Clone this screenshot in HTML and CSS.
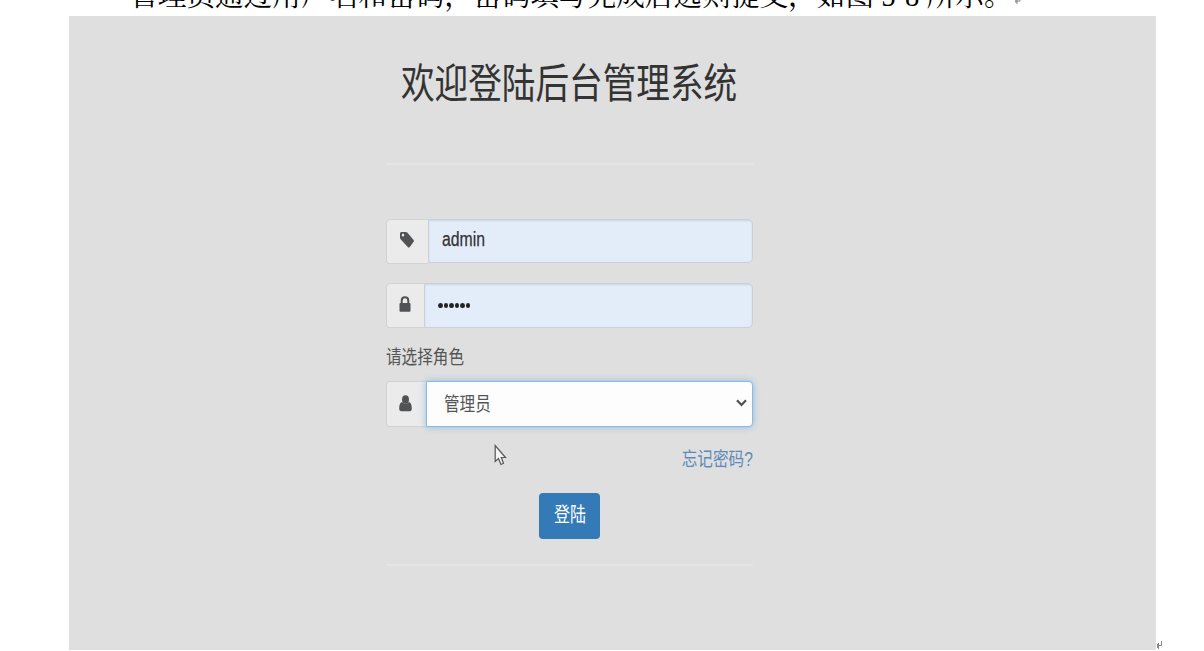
FILE: index.html
```html
<!DOCTYPE html>
<html lang="zh-CN">
<head>
<meta charset="utf-8">
<title>后台管理系统</title>
<link rel="stylesheet" href="styles.css">
</head>
<body>
<p class="caption"><span>管理员通过用户名和密码，密码填写完成后选则提交，如图 5-8 所示。</span><svg class="mark" width="7" height="9" viewBox="0 0 7 9"><path d="M6 0v4H1M3 2v5M2 3v3" fill="none" stroke="#888"/></svg></p>
<div class="row">
<main class="page">
  <form class="login">
    <h1 class="title"><span class="narrow">欢迎登陆后台管理系统</span></h1>
    <hr class="rule">
    <div class="group name">
      <span class="addon"><svg width="14" height="16" viewBox="0 0 14 16"><path fill="#505254" fill-rule="evenodd" d="M0 1.5Q0 0 1.3 0H5.8Q6.8 0 7.5.8L13.6 8Q14.3 8.9 13.6 9.8L9.600 15.2Q8.800 16 8 15.2L.8 7.5Q0 6.800 0 5.600ZM1.8 3A1.2 1.5 0 1 0 4.2 3A1.2 1.5 0 1 0 1.8 3Z"/></svg></span>
      <span class="field"><span class="narrow latin">admin</span></span>
    </div>
    <div class="group pass">
      <span class="addon"><svg width="12" height="16" viewBox="0 0 12 16"><path d="M2.7 8V4.7C2.7.1 9.3.1 9.3 4.7V8" fill="none" stroke="#505254" stroke-width="2"/><rect y="7" x=".5" width="11" height="8.7" rx="1" fill="#505254"/></svg></span>
      <span class="field"><span class="dots"><i></i><i></i><i></i><i></i><i></i><i></i></span></span>
    </div>
    <div class="label"><span class="narrow">请选择角色</span></div>
    <div class="group role">
      <span class="addon"><svg width="13" height="17" viewBox="0 0 13 17"><ellipse cx="6.5" cy="4.500" rx="3.500" ry="4.300" fill="#505254"/><path fill="#505254" d="M3 7C1 7.700.2 10 .2 13.600.2 15.500 1 16.300 2.200 16.300H10.800C12 16.300 12.800 15.500 12.800 13.600 12.800 10 12 7.700 10 7 8 9 5 9 3 7Z"/></svg></span>
      <span class="field select"><span class="narrow">管理员</span><svg class="chevron" width="11" height="8" viewBox="0 0 11 8"><path d="M1 1.2 5.5 6 10 1.2" fill="none" stroke="#505050" stroke-width="2.2"/></svg></span>
    </div>
    <div class="forgot"><a class="narrow">忘记密码?</a></div>
    <div class="submit"><span class="button"><span class="narrow">登陆</span></span></div>
    <hr class="rule last">
  </form>
  <svg class="cursor" width="13" height="22" viewBox="0 0 13 22"><path d="M1.2 1.5V17.5L4.5 14.6 7 20.5 9.5 19.3 7.3 13.5H11.5Z" fill="#f4f4f4" stroke="#555" stroke-width="1.2"/></svg>
</main>
<svg class="mark end" width="7" height="9" viewBox="0 0 7 9"><path d="M5.5 0v4.500H1M2.500 2v6M1.500 3v4" fill="none" stroke="#888"/></svg>
</div>
</body>
</html>
```
FILE: styles.css
```css
* { box-sizing: border-box; }
body {
  margin: 0;
  height: 651px;
  overflow: hidden;
  background: #fff;
  font-family: "Liberation Sans", "Noto Sans CJK SC", sans-serif;
}
.caption {
  display: flex;
  align-items: flex-end;
  height: 16px;
  margin: 0;
  padding-left: 129px;
  overflow: hidden;
  color: #000;
  font: 28.67px/40px "Liberation Serif", "Noto Serif CJK SC", "Noto Sans CJK SC", serif;
  white-space: nowrap;
}
.caption span { height: 40px; margin-bottom: 0; }
.mark { flex: none; margin: 0 0 10px 1px; }
.row { display: flex; align-items: flex-end; padding-left: 69px; }
.page { position: relative; width: 1087px; height: 634px; background: #dfdfdf; }
.mark.end { margin: 0; }
.login { width: 367px; margin-left: 316.500px; }
.narrow {
  display: inline-block;
  transform: scaleX(.8);
  transform-origin: left center;
  white-space: nowrap;
}
.title {
  height: 147px;
  margin: 0;
  padding: 38px 0 0 15px;
  color: #333;
  font-size: 41px;
  font-weight: 400;
  line-height: 60px;
}
.title .narrow { transform: scaleX(.82); }
.rule { height: 2px; margin: 0; border: 0; background: #e5e5e5; }
.group { display: flex; height: 45px; color: #555; font-size: 19.500px; }
.addon {
  display: flex;
  align-items: center;
  justify-content: center;
  width: 42px;
  padding-right: 1px;
  padding-bottom: 3px;
  border: 1px solid #d2d2d2;
  border-right: 0;
  border-radius: 4px 0 0 4px;
  background: #ebebeb;
}
.field {
  display: flex;
  flex: 1;
  align-items: center;
  height: 44px;
  padding: 0 5px 3px 13px;
  border: 1px solid #cbd1d9;
  border-radius: 0 5px 5px 0;
  background: #e3edfa;
  box-shadow: inset 0 1px 2px #cdd5e0;
}
.latin { color: #333; transform: scaleX(.81); -webkit-text-stroke: .25px #333; }
.name { margin-top: 54px; }
.pass { margin-top: 19px; }
.pass .addon { width: 38.500px; }
.pass .field { height: 45px; padding: 0 0 1px 13px; }
.dots { display: flex; gap: 1px; }
.dots i { width: 4.500px; height: 5px; border-radius: 50%; background: #222; }
.label { height: 53px; padding-top: 13px; color: #555; font-size: 19.500px; line-height: 32px; }
.role { height: 46px; }
.role .addon { width: 40px; padding-bottom: 2px; }
.role .field {
  height: 46px;
  padding-left: 17px;
  border-color: #85bbe5;
  border-radius: 0 4px 4px 0;
  background: #fdfdfd;
  box-shadow: 0 0 7px #8fbbdf;
}
.chevron { margin-left: auto; }
.forgot { display: flex; justify-content: flex-end; height: 66px; padding-top: 16px; color: #5c8ab8; font-size: 19.500px; line-height: 32px; }
.forgot .narrow { transform-origin: right center; }
.submit { display: flex; justify-content: center; height: 71px; }
.button {
  width: 61px;
  height: 46px;
  padding-left: 15px;
  border-radius: 4px;
  background: #337ab7;
  color: #fff;
  font-size: 20px;
  line-height: 45px;
}
.cursor { position: absolute; left: 425px; top: 428px; }
```
